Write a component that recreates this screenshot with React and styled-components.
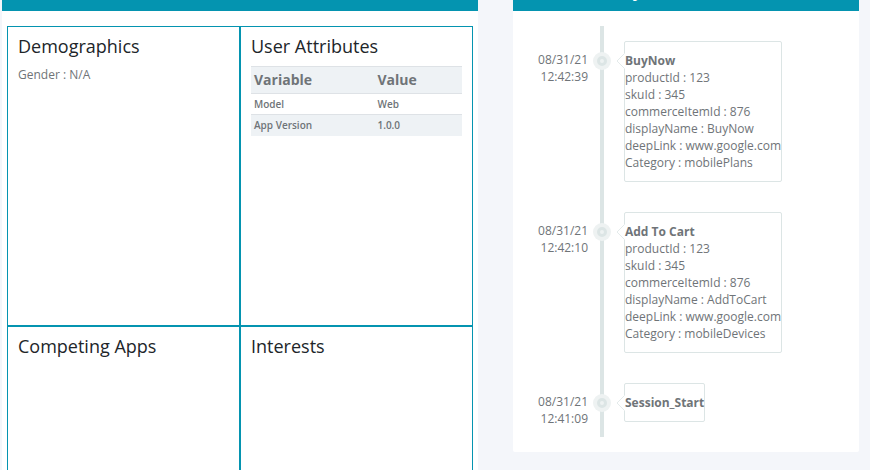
import React from "react";
import styled, { createGlobalStyle } from "styled-components";

const GlobalStyle = createGlobalStyle`
  *, *::before, *::after { box-sizing: border-box; }
  body {
    margin: 0;
    background: #f4f6fa;
    color: #6f7478;
    font: 12px/17px "Open Sans", "Noto Sans", sans-serif;
  }
`;

const Viewport = styled.div`
  height: 100vh;
  overflow: hidden;
`;

/* The page is scrolled so that only the lower edge of the headers shows. */
const Page = styled.main`
  display: grid;
  grid-template-columns: 476fr 346fr;
  align-items: start;
  gap: 35px;
  margin-top: -29px;
  padding: 0 11px 0 2px;
`;

const Card = styled.section`
  background: #fff;
  border-radius: 2px;
`;

const CardHeader = styled.header`
  height: 40px;
  padding: 7px 20px;
  background: #0494b0;
  color: #fff;
`;

const CardTitle = styled.h2`
  margin: 0;
  font-size: 18px;
  line-height: 24px;
  font-weight: 600;
`;

const ProfileGrid = styled.div`
  display: grid;
  grid-template-columns: 1fr 1fr;
  grid-auto-rows: minmax(300px, auto);
  padding: 15px 5px;
`;

const Cell = styled.section`
  border: 1px solid #0494b0;
  padding: 9px 10px;
`;

const CellTitle = styled.h3`
  margin: 0 0 10px;
  color: #212529;
  font-size: 18px;
  line-height: 20px;
  font-weight: 400;
`;

const Text = styled.p`
  margin: 0;
`;

const Table = styled.table`
  width: 100%;
  border-collapse: collapse;
  table-layout: fixed;
`;

const HeadCell = styled.th`
  width: ${({ $wide }) => ($wide ? "58.5%" : "auto")};
  height: 27px;
  padding: 0 3px 1px;
  border-top: 1px solid #dee2e6;
  border-bottom: 1px solid #dee2e6;
  background: #eef2f5;
  font-size: 14px;
  font-weight: 700;
  text-align: left;
`;

const BodyRow = styled.tr`
  &:nth-child(even) { background: #eef2f5; }
  & + & { border-top: 1px solid #dee2e6; }
`;

const DataCell = styled.td`
  height: 21px;
  padding: 0 3px;
  font-size: 10px;
  font-weight: 600;
`;

const TimelineBody = styled.div`
  padding: 15px 0;
`;

const Timeline = styled.ol`
  position: relative;
  display: flex;
  flex-direction: column;
  gap: 30px;
  margin: 0;
  padding: 15px 0 10px;
  list-style: none;

  &::before {
    content: "";
    position: absolute;
    top: 0;
    bottom: 0;
    left: 87px;
    width: 4px;
    background: #dce5e5;
  }
`;

const Event = styled.li`
  display: grid;
  grid-template-columns: 75px 28px auto;
  justify-content: start;
  align-items: start;
`;

const EventTime = styled.time`
  display: flex;
  flex-direction: column;
  padding-top: 10px;
  text-align: right;
`;

const Marker = styled.span`
  position: relative;
  justify-self: center;
  display: grid;
  place-items: center;
  width: 18px;
  height: 18px;
  margin-top: 11px;
  border-radius: 50%;
  background: #eef2f2;

  &::before {
    content: "";
    width: 10px;
    height: 10px;
    border: 3px solid #dce5e5;
    border-radius: 50%;
  }
`;

const EventBox = styled.article`
  position: relative;
  margin-left: 8px;
  padding: 10px 0;
  border: 1px solid #dce5e5;
  border-radius: 2px;
`;

const Pointer = styled.svg`
  position: absolute;
  top: 11px;
  left: -9px;
  width: 9px;
  height: 16px;
`;

const EventTitle = styled.h4`
  position: relative;
  margin: 0;
  font-size: 12px;
  line-height: 17px;
  font-weight: 700;
`;

const events = [
  {
    date: "08/31/21",
    time: "12:42:39",
    iso: "2021-08-31T12:42:39",
    title: "BuyNow",
    details: [
      "productId : 123",
      "skuId : 345",
      "commerceItemId : 876",
      "displayName : BuyNow",
      "deepLink : www.google.com",
      "Category : mobilePlans",
    ],
  },
  {
    date: "08/31/21",
    time: "12:42:10",
    iso: "2021-08-31T12:42:10",
    title: "Add To Cart",
    details: [
      "productId : 123",
      "skuId : 345",
      "commerceItemId : 876",
      "displayName : AddToCart",
      "deepLink : www.google.com",
      "Category : mobileDevices",
    ],
  },
  {
    date: "08/31/21",
    time: "12:41:09",
    iso: "2021-08-31T12:41:09",
    title: "Session_Start",
    details: [],
  },
];

const attributes = [
  ["Model", "Web"],
  ["App Version", "1.0.0"],
];

function TimelineEvent({ event }) {
  return (
    <Event>
      <EventTime dateTime={event.iso}>
        <span>{event.date}</span>
        <span>{event.time}</span>
      </EventTime>
      <Marker />
      <EventBox>
        <Pointer viewBox="0 0 9 16" aria-hidden="true">
          <path d="M9 0L1 8L9 16Z" fill="#fff" />
          <path d="M8.500 .5L1 8L8.500 15.500" fill="none" stroke="#e4ebeb" />
        </Pointer>
        <EventTitle>{event.title}</EventTitle>
        {event.details.map((line) => (
          <Text key={line}>{line}</Text>
        ))}
      </EventBox>
    </Event>
  );
}

export default function App() {
  return (
    <>
      <GlobalStyle />
      <Viewport>
        <Page>
          <Card>
            <CardHeader />
            <ProfileGrid>
              <Cell>
                <CellTitle>Demographics</CellTitle>
                <Text>Gender : N/A</Text>
              </Cell>
              <Cell>
                <CellTitle>User Attributes</CellTitle>
                <Table>
                  <thead>
                    <tr>
                      <HeadCell scope="col" $wide>Variable</HeadCell>
                      <HeadCell scope="col">Value</HeadCell>
                    </tr>
                  </thead>
                  <tbody>
                    {attributes.map(([name, value]) => (
                      <BodyRow key={name}>
                        <DataCell>{name}</DataCell>
                        <DataCell>{value}</DataCell>
                      </BodyRow>
                    ))}
                  </tbody>
                </Table>
              </Cell>
              <Cell>
                <CellTitle>Competing Apps</CellTitle>
              </Cell>
              <Cell>
                <CellTitle>Interests</CellTitle>
              </Cell>
            </ProfileGrid>
          </Card>
          <Card>
            <CardHeader>
              <CardTitle>User Activity</CardTitle>
            </CardHeader>
            <TimelineBody>
              <Timeline>
                {events.map((event) => (
                  <TimelineEvent key={event.iso} event={event} />
                ))}
              </Timeline>
            </TimelineBody>
          </Card>
        </Page>
      </Viewport>
    </>
  );
}
